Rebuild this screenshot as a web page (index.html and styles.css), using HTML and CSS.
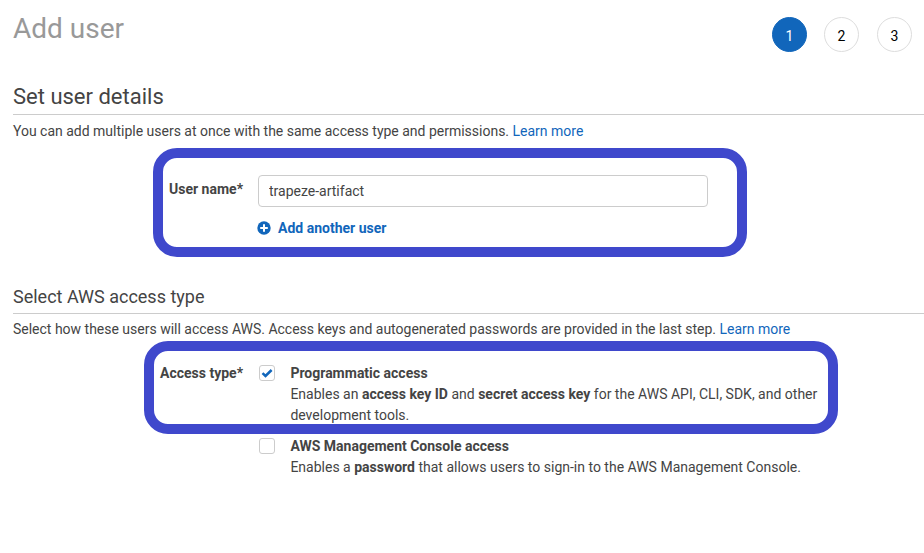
FILE: index.html
```html
<!DOCTYPE html>
<html lang="en">
<head>
<meta charset="utf-8">
<title>Add user</title>
<link rel="stylesheet" href="styles.css">
</head>
<body>
<header class="header">
  <h1 class="title">Add user</h1>
  <ol class="steps">
    <li class="step step-active">1</li>
    <li class="step">2</li>
    <li class="step">3</li>
  </ol>
</header>
<main>
  <section class="section details">
    <h2 class="heading">Set user details</h2>
    <p class="intro intro-details">You can add multiple users at once with the same access type and permissions. <a class="link" href="#">Learn more</a></p>
    <div class="form-row name-row">
      <label class="label" for="username">User name*</label>
      <div class="field">
        <input class="input" id="username" type="text" value="trapeze-artifact">
        <a class="add-user" href="#">
          <svg class="plus" viewBox="0 0 14 14"><circle cx="7" cy="7" r="6.7" fill="#1166bb"/><path d="M7 3.2v7.6M3.2 7h7.6" stroke="#fff" stroke-width="2"/></svg>
          <span class="add-text">Add another user</span>
        </a>
      </div>
    </div>
    <div class="highlight highlight-name"></div>
  </section>
  <section class="section access">
    <h3 class="heading heading-small">Select AWS access type</h3>
    <p class="intro intro-access">Select how these users will access AWS. Access keys and autogenerated passwords are provided in the last step. <a class="link" href="#">Learn more</a></p>
    <div class="form-row access-row">
      <div class="label">Access type*</div>
      <div class="options">
        <div class="option">
          <span class="checkbox"><svg class="check" viewBox="0 0 14 14"><path d="M2.5 7.2L5.5 10L11.6 4" fill="none" stroke="#1166bb" stroke-width="2.5"/></svg></span>
          <div class="option-text"><b class="option-name">Programmatic access</b><p class="desc">Enables an <b>access key ID</b> and <b>secret access key</b> for the AWS API, CLI, SDK, and other<br>development tools.</p></div>
        </div>
        <div class="option">
          <span class="checkbox"></span>
          <div class="option-text"><b class="option-name">AWS Management Console access</b><p class="desc">Enables a <b>password</b> that allows users to sign-in to the AWS Management Console.</p></div>
        </div>
      </div>
    </div>
    <div class="highlight highlight-access"></div>
  </section>
</main>
</body>
</html>
```
FILE: styles.css
```css
* { box-sizing: border-box; }
body {
  margin: 0;
  padding-left: 13px;
  height: 553px;
  overflow: hidden;
  background: #fff;
  color: #444;
  font: 14px/21px Roboto, "Liberation Sans", sans-serif;
}
h1, h2, h3, p, ol { margin: 0; padding: 0; }
b { font-weight: 700; }
.header {
  display: flex;
  justify-content: space-between;
  height: 80px;
  padding-right: 12px;
}
.title {
  padding-top: 11px;
  color: #999;
  font-size: 28px;
  line-height: 36px;
  font-weight: 400;
}
.steps {
  display: flex;
  padding-top: 17px;
  list-style: none;
}
.step {
  width: 35px;
  height: 35px;
  margin-left: 18px;
  border: 1px solid #ddd;
  border-radius: 50%;
  color: #000;
  line-height: 36px;
  text-align: center;
}
.step-active {
  margin-right: -1px;
  border-color: #1166bb;
  background: #1166bb;
  color: #fff;
}
.section { position: relative; }
.details { height: 202px; }
.heading {
  height: 35px;
  border-bottom: 1px solid #ccc;
  font-size: 22px;
  line-height: 33px;
  font-weight: 400;
}
.heading-small {
  height: 32px;
  font-size: 18px;
  line-height: 30px;
}
.intro { padding-top: 6px; letter-spacing: -0.006px; }
.intro-access { padding-top: 5px; }
.link { color: #1166bb; text-decoration: none; }
.form-row { display: flex; }
.label {
  flex: none;
  width: 230px;
  margin-right: 15px;
  text-align: right;
  font-weight: 700;
}
.name-row { padding-top: 33px; }
.name-row .label { padding-top: 4px; }
.input {
  display: block;
  width: 450px;
  height: 32px;
  padding: 0 10px;
  border: 1px solid #ccc;
  border-radius: 4px;
  color: #444;
  font: inherit;
}
.add-user {
  display: flex;
  align-items: center;
  gap: 7px;
  margin: 11px 0 0 -1px;
  color: #1166bb;
  font-weight: 700;
  text-decoration: none;
}
.plus { width: 14px; height: 14px; margin-bottom: 1px; }
.access-row { padding-top: 23px; }
.options {
  display: flex;
  flex-direction: column;
  gap: 10px;
}
.option { display: flex; padding-left: 1px; }
.checkbox {
  flex: none;
  width: 16px;
  height: 16px;
  margin: 2px 15.4px 0 0;
  border: 1px solid #ccc;
  border-radius: 3px;
}
.check { display: block; width: 14px; height: 14px; }
.option-name { display: block; }
.highlight {
  position: absolute;
  border: 10px solid #3f48cc;
  border-radius: 24px;
  pointer-events: none;
}
.highlight-name { left: 140px; top: 68px; width: 594px; height: 109px; }
.highlight-access { left: 131px; top: 59px; width: 694px; height: 93px; }
```
